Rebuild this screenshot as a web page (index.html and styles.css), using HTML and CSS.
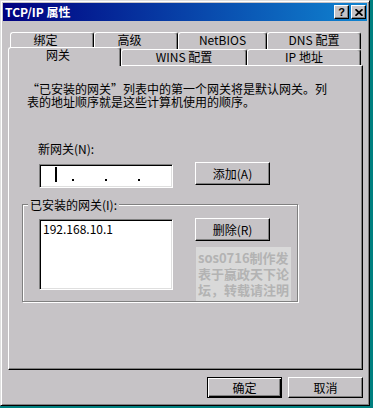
FILE: index.html
```html
<!DOCTYPE html>
<html lang="zh-CN">
<head>
    <meta charset="UTF-8">
    <title>TCP/IP 属性</title>

    <link rel="stylesheet" href="styles.css">
</head>
<body>
    <div class="dialog">
        <div class="titlebar">
            <span class="title">TCP/IP 属性</span>
            <div class="title-btns">
                <span class="tbtn">?</span>
                <span class="tbtn">
                    <svg width="8" height="7" viewBox="0 0 8 7">
                        <path d="M0.5 0.2 L7.5 6.8 M7.5 0.2 L0.5 6.8" stroke="#000" stroke-width="1.7" fill="none"></path>
                    </svg>
                </span>
            </div>
        </div>

        <div class="content">
            <div class="tab-row back">
                <div class="tab cjk w84">绑定</div>
                <div class="tab cjk w84">高级</div>
                <div class="tab w89">NetBIOS</div>
                <div class="tab w94">DNS 配置</div>
            </div>
            <div class="tab-row front">
                <div class="tab cjk active w113">网关</div>
                <div class="tab w126">WINS 配置</div>
                <div class="tab w114">IP 地址</div>
            </div>

            <div class="panel">
                <p class="intro">“已安装的网关”列表中的第一个网关将是默认网关。列<br>表的地址顺序就是这些计算机使用的顺序。</p>

                <div class="label">新网关(N):</div>
                <div class="row">
                    <div class="ip-input">
                        <span class="octet"><span class="caret"></span></span>
                        <span class="dot"></span>
                        <span class="octet"></span>
                        <span class="dot"></span>
                        <span class="octet"></span>
                        <span class="dot"></span>
                        <span class="octet"></span>
                    </div>
                    <div class="btn">添加(A)</div>
                </div>

                <fieldset class="group">
                    <legend>已安装的网关(I):</legend>
                    <div class="group-row">
                        <div class="listbox">
                            <div class="item">192.168.10.1</div>
                        </div>
                        <div class="side">
                            <div class="btn">删除(R)</div>
                            <div class="stamp">sos0716制作发<br>表于嬴政天下论<br>坛，转载请注明</div>
                        </div>
                    </div>
                </fieldset>
            </div>

            <div class="footer">
                <div class="btn small default">确定</div>
                <div class="btn small">取消</div>
            </div>
        </div>
    </div>
</body>
</html>
```

FILE: styles.css
```css
body {
    margin: 0;
    background: #008080;

    font-family: "Noto Sans CJK SC", sans-serif;
    font-size: 12px;
    line-height: 13px;
    color: #000;
}

.dialog {
    width: 370px;
    height: 406px;
    box-sizing: border-box;
    padding: 2px;

    background: #c6c3c6;
    border: 1px solid;
    border-color: #dfdfdf #000 #000 #dfdfdf;
    box-shadow: inset 1px 1px #fff, inset -1px -1px #808080;
}

/* title bar */

.titlebar {
    height: 18px;
    padding: 0 1px 0 2px;

    display: flex;
    align-items: center;
    justify-content: space-between;

    background: linear-gradient(to right, #000080, #1084d0);
    color: #fff;
}

.title {
    font-weight: bold;
    line-height: 18px;
}

.title-btns {
    display: flex;
    gap: 2px;
}

.tbtn {
    width: 15px;
    height: 14px;
    box-sizing: border-box;

    display: flex;
    align-items: center;
    justify-content: center;

    background: #c6c3c6;
    border: 1px solid;
    border-color: #fff #000 #000 #fff;
    box-shadow: inset -1px -1px #808080;

    color: #000;
    font-family: "Liberation Sans", sans-serif;
    font-weight: bold;
    font-size: 11px;
    line-height: 12px;
}

.content {
    padding: 11px 4px 0 5px;
}

/* tabs */

.tab-row {
    display: flex;
}

.tab-row.back {
    height: 17px;
    padding-left: 2px;
}

.tab-row.front {
    height: 18px;
    margin-top: -2px;
    align-items: flex-end;

    position: relative;
    z-index: 1;
}

.tab {
    height: 17px;
    box-sizing: border-box;

    background: #c6c3c6;
    border: 1px solid;
    border-bottom: 0;
    border-color: #fff #000 #000 #fff;
    border-radius: 3px 3px 0 0;
    box-shadow: inset -1px 0 #808080;

    text-align: center;
    white-space: nowrap;
}

.tab.cjk {
    padding-right: 13px;
}

.tab-row.front .tab {
    height: 16px;
}

.tab-row.front .tab.active {
    height: 19px;
    margin-bottom: -1px;
}

.w84 { width: 84px; }
.w89 { width: 89px; }
.w94 { width: 94px; }
.w113 { width: 113px; }
.w114 { width: 114px; }
.w126 { width: 126px; }

/* panel */

.panel {
    width: 355px;
    height: 305px;
    box-sizing: border-box;
    padding: 16px 18px 0;

    border: 1px solid;
    border-color: #fff #000 #000 #fff;
    box-shadow: inset -1px -1px #808080;
}

.intro {
    margin: 0;
}

.label {
    margin: 34px 0 0 11px;
}

.row {
    margin-top: 7px;
    display: flex;
    align-items: flex-start;
}

.row .btn {
    margin-left: 22px;
}

.ip-input,
.listbox {
    box-sizing: border-box;
    background: #fff;
    border: 1px solid;
    border-color: #808080 #fff #fff #808080;
    box-shadow: inset 1px 1px #000, inset -1px -1px #dfdfdf;
}

.ip-input {
    width: 134px;
    height: 24px;
    margin: 2px 0 0 12px;
    padding: 2px 0 0 1px;

    display: flex;
    align-items: flex-start;
}

.octet {
    width: 30px;
    height: 15px;
    display: flex;
    justify-content: center;
}

.caret {
    width: 2px;
    height: 15px;
    background: #000;
}

.dot {
    width: 2px;
    height: 2px;
    margin: 12px 0 0 1px;
    background: #000;
}

.btn {
    width: 75px;
    height: 23px;
    box-sizing: border-box;

    display: flex;
    align-items: center;
    justify-content: center;

    border: 1px solid;
    border-color: #fff #000 #000 #fff;
    box-shadow: inset -1px -1px #808080;
}

.btn.small {
    height: 21px;
}

.btn.default {
    border-color: #000;
    box-shadow: inset 1px 1px #fff, inset -1px -1px #000, inset -2px -2px #808080;
}

/* installed gateways group */

.group {
    width: 276px;
    min-width: 0;
    box-sizing: border-box;
    margin: 10px 0 0 -5px;
    padding: 7px 0 0 16px;

    border: 1px solid #808080;
    box-shadow: inset 1px 1px #fff, 1px 1px #fff;
}

.group legend {
    margin-left: -11px;
    padding: 0 2px;
    background: #c6c3c6;
    line-height: 13px;
}

.group-row {
    display: flex;
    align-items: flex-start;
}

.listbox {
    width: 134px;
    height: 71px;
    margin-top: 1px;
    padding: 2px 3px;
}

.side {
    margin-left: 22px;
}

.stamp {
    width: 95px;
    height: 54px;
    box-sizing: border-box;
    margin: 6px 0 0 1px;
    padding: 3px 0 0 2px;

    background: #d9d9d9;
    color: #b3b3b3;

    font-weight: bold;
    font-size: 13px;
    line-height: 16px;
    white-space: nowrap;
}

.footer {
    margin-top: 7px;
    display: flex;
    justify-content: flex-end;
    gap: 6px;
}
```
